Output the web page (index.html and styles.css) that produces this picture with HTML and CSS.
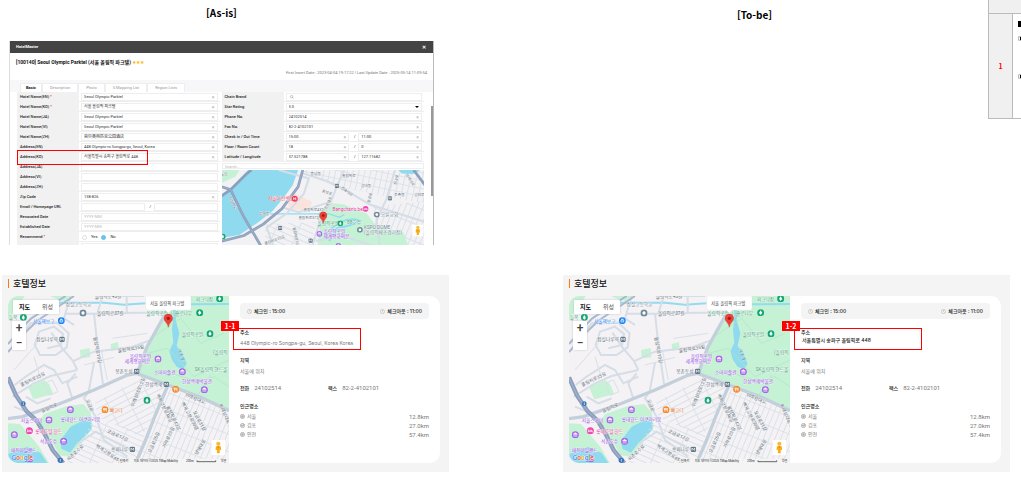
FILE: index.html
```html
<!DOCTYPE html>
<html lang="ko">
<head>
<meta charset="utf-8">
<title>Hotel address comparison</title>
<link rel="stylesheet" href="styles.css">
</head>
<body>
<svg class="defs" width="0" height="0" aria-hidden="true">
  <defs>
    <pattern id="blocksA" width="60" height="17" patternUnits="userSpaceOnUse" patternTransform="rotate(-27)"><path d="M0 1H60M1 0V17" class="lane"/></pattern>
    <pattern id="blocksB" width="62" height="16" patternUnits="userSpaceOnUse" patternTransform="rotate(24)"><path d="M0 1H62M1 0V16" class="lane"/></pattern>
    <pattern id="blocksC" width="16" height="48" patternUnits="userSpaceOnUse" patternTransform="rotate(22)"><path d="M0 1H16M1 0V48" class="lane"/></pattern>
    <pattern id="blocksD" width="17" height="23" patternUnits="userSpaceOnUse" patternTransform="rotate(12)"><path d="M0 1H17M1 0V23" class="lane"/></pattern>
    <symbol id="tree" viewBox="-11 -11 22 22"><circle r="10.500" fill="#16a673"/><path d="M0-7L5 1H2L5 4H1V7H-1V4H-5L-2 1H-5Z" fill="#fff"/></symbol>
    <symbol id="museum" viewBox="-11 -11 22 22"><circle r="10.500" fill="#a763ea"/><path d="M-6-2L0-6L6-2V-1H-6ZM-4 0V4M0 0V4M4 0V4M-6 5H6" fill="#fff" stroke="#fff" stroke-width="1.500"/></symbol>
    <symbol id="food" viewBox="-11 -11 22 22"><circle r="10.500" fill="#f58a2c"/><path d="M-5-5V0H-1V-5M-3-5V6M4 6V-5Q0-3 2 1H4" fill="none" stroke="#fff" stroke-width="2"/></symbol>
    <symbol id="metro" viewBox="-9 -9 18 18"><rect x="-8" y="-8" width="16" height="16" rx="4" fill="#637786"/><path d="M-4 4V-4L0 1L4-4V4" fill="none" stroke="#fff" stroke-width="2"/></symbol>
    <symbol id="bed" viewBox="-11 -11 22 22"><circle r="10.500" fill="#f245ad"/><path d="M-6-4V5M-6 2H6V5M-3-1H5V2" fill="none" stroke="#fff" stroke-width="2"/></symbol>
    <symbol id="school" viewBox="-11 -11 22 22"><circle r="10.500" fill="#71889a"/><circle r="5" fill="#fff"/></symbol>
    <symbol id="pin" viewBox="0 0 28 42"><path d="M14 1C6 1 1 7 1 14C1 24 12 27 14 41C16 27 27 24 27 14C27 7 22 1 14 1Z" fill="#ea4335" stroke="#c5221f"/><circle cx="14" cy="14" r="5" fill="#b31412"/></symbol>
    <symbol id="pegman" viewBox="0 0 40 44"><rect width="40" height="44" rx="3" fill="#fff"/><circle cx="20" cy="11" r="6" fill="#fbbc2c"/><path d="M13 18H27L28 29H24V38H16V29H12Z" fill="#f9ad17"/><path d="M16 19H24L20 24Z" fill="#d98510"/></symbol>

    <symbol id="cityMap" viewBox="42 78 663 501" preserveAspectRatio="xMidYMid slice">
      <rect x="42" y="78" width="663" height="501" fill="#f4f2f4"/>
      <path d="M42 78H92L74 108L42 150ZM168 78H230L214 94L190 88ZM258 240L287 234L289 262L260 265ZM350 222L372 216L374 238L352 243ZM102 352L150 330L165 342L178 372L118 388Z" class="park"/>
      <path d="M540 78H705V420L610 378L525 342L432 306L460 232L520 130Z" class="park"/>
      <path d="M150 432L220 408L268 402L290 428L296 470L262 520L225 560L196 556L168 505L132 462Z" class="park"/>
      <path d="M42 460L78 462L134 528L165 579H42Z" class="park"/>
      <path d="M42 552L100 530L140 549L160 579H42ZM230 470L270 450L293 458L292 480L250 520L228 548L202 536L198 512Z" class="water"/>
      <path d="M538 78L548 108L545 150L556 190L548 228L566 250L578 282L566 298L548 290L534 270L526 244L538 218L534 180L538 140Z" class="water"/>
      <path d="M304 398L430 325L516 355L470 460L440 500L310 440Z" fill="url(#blocksA)"/>
      <path d="M300 445L455 490L425 579H220Z" fill="url(#blocksB)"/>
      <path d="M528 356L705 425V579H435L476 468Z" fill="url(#blocksC)"/>
      <path d="M195 98H330L390 104L455 100M590 103L705 102" fill="none" stroke="#91dcef" stroke-width="6"/>
      <g class="road">
        <path d="M215 131H330L420 128H520M300 130L309 215L327 342M230 78L210 145L240 165M250 300L236 272L205 236L172 188M236 274L300 245L410 232L465 212M250 320L205 340L180 300L150 285L95 320L62 345M300 278L284 365L270 385L305 440L330 510L400 560M245 310L220 340L235 385M80 200L110 160L190 158L224 190L218 232L185 255L138 255L122 225L135 185L180 170L207 192L201 225L160 235M56 380L120 340L170 318L250 300M326 79L310 130M398 78V128M110 430L60 410M95 380L130 400L170 385M250 522L305 485L360 515L420 545M360 78H450"/>
      </g>
      <path d="M150 340L175 330L192 365L166 376ZM120 260L138 320M60 300L130 220M270 285L360 262M355 205L460 190M322 240L340 330" class="lane"/>
      <path d="M478 200L560 145L620 220L690 190M460 250L520 235L600 320L705 270M500 300L610 335L660 320L705 350M610 378L650 315" class="trail"/>
      <path d="M430 310L458 232L525 112L542 78M42 446L86 440L195 402L300 360L400 315L428 310L530 348L620 382L705 422M520 350L482 440L455 510L425 579" class="avenue"/>
      <path d="M42 222L78 180L112 145L215 78M42 246L88 193L130 152L240 78" class="highway"/>
      <path d="M42 322L66 376L98 424L128 452L154 496L176 540L208 579" class="expressway"/>
      <path d="M42 322L66 376L98 424L128 452L154 496L176 540L208 579" fill="none" stroke="#b4c3d8" stroke-width="2"/>
      <g class="place">
        <text x="302" y="85">올림픽로43길</text><text x="309" y="136">올림픽로37길</text>
        <text x="372" y="248" transform="rotate(-10 372 248)">올림픽로35길</text>
        <text x="298" y="202" transform="rotate(79 298 202)">올림픽로13길</text>
        <text x="82" y="350" transform="rotate(-26 82 350)">올림픽로35길</text>
        <text x="144" y="428" transform="rotate(-23 144 428)">올림픽로</text>
        <text x="127" y="213">잠실나루역</text><text x="364" y="309">몽촌토성</text><text x="453" y="347">한성백제</text><text x="351" y="543">송파나루</text>
        <text x="276" y="390" transform="rotate(70 276 390)">오금로</text>
        <text x="572" y="377" transform="rotate(23 572 377)">위례성대로</text>
        <text x="338" y="487" transform="rotate(24 338 487)">오금로17길</text>
        <text x="304" y="530" transform="rotate(34 304 530)">백제고분로45길</text>
        <text x="224" y="574" transform="rotate(-44 224 574)">석촌호수로</text>
        <text x="419" y="411" transform="rotate(-68 419 411)">위례성대로12길</text>
        <text x="486" y="375" transform="rotate(64 486 375)">백제고분로48길</text>
        <text x="516" y="410" transform="rotate(64 516 410)">올림픽로43길</text>
        <text x="562" y="400" transform="rotate(62 562 400)">백제고분로50길</text>
        <text x="596" y="425" transform="rotate(62 596 425)">오금로31길</text>
        <text x="674" y="404" transform="rotate(66 674 404)">위례성대로16길</text>
        <text x="470" y="550" transform="rotate(-66 470 550)">오금로25길</text>
        <text x="514" y="535" transform="rotate(-66 514 535)">가락로23길</text>
        <text x="610" y="556" transform="rotate(-60 610 556)">양재대로</text>
      </g>
      <g class="place grey"><text x="215" y="109">잠실고등학교</text><text x="548" y="240" transform="rotate(65 548 240)" fill="#268ba5">몽촌호</text></g>
      <g class="place green"><text x="44" y="147">들목</text><text x="457" y="135">올림픽공원</text><text x="530" y="135">나홀로나무</text><text x="563" y="197">올림픽공원</text><text x="602" y="303">SK올림픽 핸드볼</text><text x="657" y="252">(올림픽</text><text x="606" y="92">피크닉장</text></g>
      <g class="place violet"><text x="407" y="264">올림픽공원</text><text x="392" y="280">세계평화의문</text><text x="480" y="311">소마미술관</text><text x="564" y="339">한성백제박물관</text><text x="80" y="456">서울스카이</text><text x="200" y="452">롯데월드 아쿠아리움</text><text x="138" y="518">석촌호수</text><text x="44" y="546">: 매직아일랜드</text></g>
      <g class="place"><text x="117" y="158" fill="#167bf0">서울책보고</text><text x="124" y="488" fill="#e8369b">롯데호텔 월드</text><text x="347" y="425" fill="#e46b16">뻐고디</text></g>
      <use href="#tree" x="77" y="131" width="22" height="22"/><use href="#tree" x="606" y="117" width="22" height="22"/><use href="#tree" x="637" y="180" width="22" height="22"/><use href="#tree" x="448" y="380" width="22" height="22"/><use href="#tree" x="666" y="75" width="22" height="22"/>
      <use href="#museum" x="481" y="256" width="22" height="22"/><use href="#museum" x="554" y="294" width="22" height="22"/><use href="#museum" x="620" y="348" width="22" height="22"/><use href="#museum" x="218" y="408" width="22" height="22"/><use href="#museum" x="154" y="439" width="22" height="22"/><use href="#museum" x="198" y="503" width="22" height="22"/><use href="#museum" x="50" y="483" width="22" height="22"/><use href="#museum" x="96" y="555" width="22" height="22"/>
      <use href="#food" x="534" y="347" width="22" height="22"/><use href="#food" x="322" y="408" width="22" height="22"/><use href="#bed" x="95" y="471" width="22" height="22"/>
      <use href="#metro" x="195" y="199" width="18" height="18"/><use href="#metro" x="419" y="295" width="18" height="18"/><use href="#metro" x="508" y="334" width="18" height="18"/><use href="#metro" x="406" y="529" width="18" height="18"/>
      <use href="#school" x="256" y="118" width="22" height="22"/>
      <circle cx="202" cy="152" r="10" fill="#1685f5"/><path d="M198 150H206V156H198ZM200 150V147H204V150" fill="none" stroke="#fff" stroke-width="2"/>
      <circle cx="88" cy="401" r="7" fill="#3675bd"/><circle cx="199" cy="571" r="8" fill="#3675bd"/><path d="M88 397V405M199 567V575" stroke="#fff" stroke-width="2"/>
      <path d="M455 78H591V115Q591 120 586 120H532L523 129L514 120H460Q455 120 455 115Z" fill="#fff" stroke="#dedede"/>
      <text x="468" y="104" class="callout">서울 올림픽 파크텔</text>
      <use href="#pin" x="509" y="131" width="28" height="42"/>
      <rect x="374" y="566" width="331" height="13" fill="#f5f5f5" opacity=".8"/>
      <g class="credit"><text x="378" y="576">단축키</text><text x="419" y="576">지도 데이터 ©2025 TMap Mobility</text><text x="576" y="576">200m</text><text x="680" y="576">약관</text></g>
      <path d="M609 571V575H665V571" fill="none" stroke="#222" stroke-width="2"/>
      <text x="53" y="571" class="google"><tspan fill="#4285f4">G</tspan><tspan fill="#ea4335">o</tspan><tspan fill="#e9a900">o</tspan><tspan fill="#4285f4">g</tspan><tspan fill="#34a853">l</tspan><tspan fill="#ea4335">e</tspan></text>
      <use href="#pegman" x="652" y="510" width="42" height="46"/>
    </symbol>
  </defs>
</svg>

<main class="page">
  <h2 class="heading heading-asis">[As-is]</h2>
  <h2 class="heading heading-tobe">[To-be]</h2>

  <section class="window">
    <header class="window-bar"><span>HotelMaster</span><button type="button" aria-label="Close">✕</button></header>
    <div class="window-title">
      <h1>[100140] Seoul Olympic Parktel (서울 올림픽 파크텔) <span class="stars">★★★</span></h1>
      <p>First Insert Date : 2023-04-04 19:17:22 | Last Update Date : 2025-05-14 11:09:54</p>
    </div>
    <nav class="tabs">
      <button type="button" class="active">Basic</button><button type="button">Description</button><button type="button">Photo</button><button type="button">S Mapping List</button><button type="button">Region Lists</button>
    </nav>
    <form class="form">
      <div class="column">
        <div class="row"><label for="en">Hotel Name(EN) <i>*</i></label><span class="field"><input id="en" value="Seoul Olympic Parktel"><button type="button" aria-label="Clear">×</button></span></div>
        <div class="row"><label for="ko">Hotel Name(KO) <i>*</i></label><span class="field"><input id="ko" value="서울 올림픽 파크텔"><button type="button" aria-label="Clear">×</button></span></div>
        <div class="row"><label for="ja">Hotel Name(JA)</label><span class="field"><input id="ja" value="Seoul Olympic Parktel"><button type="button" aria-label="Clear">×</button></span></div>
        <div class="row"><label for="vi">Hotel Name(VI)</label><span class="field"><input id="vi" value="Seoul Olympic Parktel"><button type="button" aria-label="Clear">×</button></span></div>
        <div class="row"><label for="zh">Hotel Name(ZH)</label><span class="field"><input id="zh" value="首尔奥林匹克公园酒店"><button type="button" aria-label="Clear">×</button></span></div>
        <div class="row"><label for="aen">Address(EN)</label><span class="field"><input id="aen" value="448 Olympic-ro Songpa-gu, Seoul, Korea"><button type="button" aria-label="Clear">×</button></span></div>
        <div class="row marked"><label for="ako">Address(KO)</label><span class="field"><input id="ako" value="서울특별시 송파구 올림픽로 448"><button type="button" aria-label="Clear">×</button></span></div>
        <div class="row"><label for="aja">Address(JA)</label><span class="field"><input id="aja"></span></div>
        <div class="row"><label for="avi">Address(VI)</label><span class="field"><input id="avi"></span></div>
        <div class="row"><label for="azh">Address(ZH)</label><span class="field"><input id="azh"></span></div>
        <div class="row"><label for="zip">Zip Code</label><span class="field"><input id="zip" value="138-826"><button type="button" aria-label="Clear">×</button></span></div>
        <div class="row pair"><label for="mail">Email / Homepage URL</label><span class="field"><input id="mail"></span><b>/</b><span class="field"><input aria-label="Homepage URL"></span></div>
        <div class="row"><label for="ren">Renovated Date</label><span class="field"><input id="ren" placeholder="YYYY-MM"></span></div>
        <div class="row"><label for="est">Established Date</label><span class="field"><input id="est" placeholder="YYYY-MM"></span></div>
        <div class="row"><span class="name">Recommend <i>*</i></span><span class="choices"><label><input type="radio" name="rec">Yes</label><label><input type="radio" name="rec" checked>No</label></span></div>
        <div class="row"><label for="rank">Booking Owner <i>*</i></label><span class="field"><input id="rank" value="50"><button type="button" aria-label="Clear">×</button></span></div>
      </div>
      <div class="column">
        <div class="row"><label for="chain">Chain Brand</label><span class="field"><svg class="lens" viewBox="0 0 10 10"><circle cx="4" cy="4" r="3"/><path d="M6 6L9 9"/></svg><input id="chain"></span></div>
        <div class="row"><label for="star">Star Rating</label><span class="field"><select id="star"><option>3.0</option></select><span class="caret"></span></span></div>
        <div class="row"><label for="tel">Phone No.</label><span class="field"><input id="tel" value="24102514"><button type="button" aria-label="Clear">×</button></span></div>
        <div class="row"><label for="fax">Fax No.</label><span class="field"><input id="fax" value="82-2-4102101"><button type="button" aria-label="Clear">×</button></span></div>
        <div class="row pair"><label for="cin">Check in / Out Time</label><span class="field"><input id="cin" value="15:00"><button type="button" aria-label="Clear">×</button></span><b>/</b><span class="field"><input aria-label="Out time" value="11:00"><button type="button" aria-label="Clear">×</button></span></div>
        <div class="row pair"><label for="floor">Floor / Room Count</label><span class="field"><input id="floor" value="18"><button type="button" aria-label="Clear">×</button></span><b>/</b><span class="field"><input aria-label="Room count" value="0"><button type="button" aria-label="Clear">×</button></span></div>
        <div class="row pair"><label for="lat">Latitude / Longitude</label><span class="field"><input id="lat" value="37.521788"><button type="button" aria-label="Clear">×</button></span><b>/</b><span class="field"><input aria-label="Longitude" value="127.11682"><button type="button" aria-label="Clear">×</button></span></div>
        <span class="field search"><input aria-label="Search" placeholder="Search..."></span>
        <svg class="area-map" viewBox="17 30 611 225" preserveAspectRatio="xMidYMin slice" role="img" aria-label="지도">
          <rect x="17" y="30" width="611" height="225" fill="#f2f1f3"/>
          <path d="M262 30H628V130L520 110L350 75L270 40Z" fill="url(#blocksD)"/>
          <path d="M470 140L628 120V255H470Z" fill="url(#blocksC)"/>
          <path d="M150 190L300 185L290 255H150Z" fill="url(#blocksB)"/>
          <path d="M17 30H75L62 50L17 70ZM470 200L560 215L575 255H470Z" class="park"/>
          <path d="M305 160L345 128L385 132L420 148L450 158L475 190L480 255H305L312 205Z" class="park"/>
          <path d="M215 110L240 100L290 125L280 148L222 148Z" fill="#fbe3dd"/>
          <path d="M100 30H248L232 75L205 112L172 152L130 185L75 222L17 232V108L52 80Z" class="water"/>
          <path d="M545 30H610L590 42L555 40Z" class="water"/>
          <path d="M165 160H340L370 170L385 162" fill="none" stroke="#91dcef" stroke-width="4"/>
          <path d="M345 205Q390 165 430 180Q405 198 365 200L340 240" fill="none" stroke="#91dcef" stroke-width="6"/>
          <path d="M262 40L330 62L360 75L415 105L460 132L628 185M385 30L362 80L345 125L310 190L290 255M535 30L510 115L480 180L490 255M190 30L280 55L265 100L215 158L155 200L175 255M300 240L380 225L470 255M340 125L250 155L200 140" class="road"/>
          <path d="M17 78L48 88L88 170L138 255M17 110L48 88L95 42L110 30M590 30L628 80" class="expressway thin"/>
          <path d="M262 30L248 80L200 145L145 190L88 224L17 242" class="expressway thin"/>
          <path d="M17 78L48 88L88 170L138 255M262 30L248 80L200 145L145 190L88 224L17 242" fill="none" stroke="#a6b6ce" stroke-width="2"/>
          <g class="place small"><text x="285" y="46">풍납동</text><text x="318" y="95" transform="rotate(20 318 95)">풍성로</text><text x="378" y="52">올림픽로</text><text x="434" y="79">성내동</text><text x="533" y="108">둔촌동</text><text x="592" y="107">성안로</text><text x="133" y="163">잠실동</text><text x="264" y="152">올림픽로43길</text><text x="249" y="174">올림픽로37길</text><text x="332" y="148" transform="rotate(-65 332 148)">강동대로</text><text x="374" y="85" transform="rotate(35 374 85)">천호대로</text><text x="538" y="75" transform="rotate(-75 538 75)">성내로</text><text x="565" y="45" transform="rotate(55 565 45)">양재대로</text><text x="232" y="200" transform="rotate(78 232 200)">올림픽로35길</text><text x="150" y="252" transform="rotate(-20 150 252)">올림픽로35길</text><text x="42" y="112" transform="rotate(62 42 112)">잠실대교</text><text x="20" y="50" transform="rotate(-15 20 50)">뚝섬</text><text x="460" y="128" transform="rotate(-75 460 128)">풍성로</text></g>
          <g class="place"><text x="159" y="119" fill="#e83d5a">서울아산병원</text><text x="350" y="150" fill="#ee309f">Bangchan's bed</text><text x="493" y="167" class="slate">오륜교회</text><text x="443" y="206" class="slate">KSPO DOME</text><text x="443" y="219" class="slate">(올림픽체조경기장)</text></g>
          <g class="place violet"><text x="323" y="217">올림픽공원</text><text x="323" y="230">세계평화의문</text></g>
          <g class="place green"><text x="305" y="193">올림픽공원</text><text x="393" y="190">88호수</text></g>
          <circle cx="238" cy="115" r="9" fill="#ee3e5c"/><path d="M235 111V119M241 111V119M235 115H241" stroke="#fff" stroke-width="2"/>
          <use href="#bed" x="439" y="136" width="18" height="18"/><use href="#tree" x="364" y="179" width="18" height="18"/><use href="#tree" x="16" y="218" width="18" height="18"/><use href="#museum" x="302" y="210" width="18" height="18"/><use href="#museum" x="358" y="246" width="18" height="18"/><use href="#school" x="472" y="153" width="18" height="18"/><use href="#school" x="422" y="198" width="18" height="18"/><use href="#metro" x="356" y="70" width="14" height="14"/><use href="#metro" x="513" y="107" width="14" height="14"/><use href="#metro" x="188" y="195" width="14" height="14"/><use href="#metro" x="278" y="232" width="14" height="14"/>
          <use href="#pin" x="310" y="153" width="25" height="36"/>
          <use href="#pegman" x="585" y="191" width="35" height="36"/>
        </svg>
      </div>
    </form>
    <span class="scroll-thumb"></span>
  </section>

  <section class="hotel hotel-asis">
    <h3>호텔정보</h3>
    <div class="card">
      <div class="map">
        <svg role="img" aria-label="지도"><use href="#cityMap"/></svg>
        <div class="map-type"><button type="button" class="on">지도</button><button type="button">위성</button></div>
        <div class="map-zoom"><button type="button" aria-label="확대">+</button><button type="button" aria-label="축소">−</button></div>
      </div>
      <div class="info">
        <div class="times"><span><svg class="clock" viewBox="0 0 12 12"><circle cx="6" cy="6" r="5"/><path d="M6 3V6L8 8"/></svg>체크인 : 15:00</span><span><svg class="clock" viewBox="0 0 12 12"><circle cx="6" cy="6" r="5"/><path d="M6 3V6L8 8"/></svg>체크아웃 : 11:00</span></div>
        <div class="block address"><span class="mark"><em>1-1</em></span><h4>주소</h4><p>448 Olympic-ro Songpa-gu, Seoul, Korea Korea</p></div>
        <div class="block"><h4>지역</h4><p>서울에 위치</p></div>
        <dl class="contact"><div><dt>전화</dt><dd>24102514</dd></div><div><dt>팩스</dt><dd>82-2-4102101</dd></div></dl>
        <h4 class="near">인근명소</h4>
        <ul class="distances">
          <li><svg class="spot" viewBox="0 0 12 12"><circle cx="6" cy="6" r="5"/><path d="M3 6H9M4 4H8M4 8H8"/></svg>서울<span>12.8km</span></li>
          <li><svg class="spot" viewBox="0 0 12 12"><circle cx="6" cy="6" r="5"/><path d="M3 6L9 4L7 8Z"/></svg>김포<span>27.0km</span></li>
          <li><svg class="spot" viewBox="0 0 12 12"><circle cx="6" cy="6" r="5"/><path d="M3 6H9M4 4H8M4 8H8"/></svg>인천<span>57.4km</span></li>
        </ul>
      </div>
    </div>
  </section>

  <section class="hotel hotel-tobe">
    <h3>호텔정보</h3>
    <div class="card">
      <div class="map">
        <svg role="img" aria-label="지도"><use href="#cityMap"/></svg>
        <div class="map-type"><button type="button" class="on">지도</button><button type="button">위성</button></div>
        <div class="map-zoom"><button type="button" aria-label="확대">+</button><button type="button" aria-label="축소">−</button></div>
      </div>
      <div class="info">
        <div class="times"><span><svg class="clock" viewBox="0 0 12 12"><circle cx="6" cy="6" r="5"/><path d="M6 3V6L8 8"/></svg>체크인 : 15:00</span><span><svg class="clock" viewBox="0 0 12 12"><circle cx="6" cy="6" r="5"/><path d="M6 3V6L8 8"/></svg>체크아웃 : 11:00</span></div>
        <div class="block address local"><span class="mark"><em>1-2</em></span><h4>주소</h4><p>서울특별시 송파구 올림픽로 448</p></div>
        <div class="block"><h4>지역</h4><p>서울에 위치</p></div>
        <dl class="contact"><div><dt>전화</dt><dd>24102514</dd></div><div><dt>팩스</dt><dd>82-2-4102101</dd></div></dl>
        <h4 class="near">인근명소</h4>
        <ul class="distances">
          <li><svg class="spot" viewBox="0 0 12 12"><circle cx="6" cy="6" r="5"/><path d="M3 6H9M4 4H8M4 8H8"/></svg>서울<span>12.8km</span></li>
          <li><svg class="spot" viewBox="0 0 12 12"><circle cx="6" cy="6" r="5"/><path d="M3 6L9 4L7 8Z"/></svg>김포<span>27.0km</span></li>
          <li><svg class="spot" viewBox="0 0 12 12"><circle cx="6" cy="6" r="5"/><path d="M3 6H9M4 4H8M4 8H8"/></svg>인천<span>57.4km</span></li>
        </ul>
      </div>
    </div>
  </section>

  <table class="notes">
    <tr><th colspan="2"></th></tr>
    <tr><td class="number">1</td><td class="detail"><span class="square"></span><span class="bullet"></span><span class="bullet second"></span></td></tr>
  </table>
</main>
</body>
</html>
```
FILE: styles.css
```css
* { box-sizing: border-box; }
body { margin: 0; background: #fff; color: #222; font-family: Roboto, "Noto Sans CJK KR", sans-serif; overflow: hidden; }
h1, h2, h3, h4, p, dl, dd, ul { margin: 0; padding: 0; }
button, input, select { font: inherit; color: inherit; border: 0; padding: 0; margin: 0; background: none; min-width: 0; }
button { line-height: 1; cursor: pointer; }
.defs { position: absolute; }

.page { position: relative; display: grid; grid-template-columns: 1fr 1fr; grid-template-rows: 41px 204px auto; column-gap: 114px; padding: 0 11px 0 2px; }
.heading { font: bold 10px/14px "Noto Sans CJK KR", sans-serif; text-align: center; color: #000; }
.heading-asis { padding: 6px 8px 0 0; }
.heading-tobe { padding: 8px 64px 0 0; }

.window { position: relative; grid-column: 1; grid-row: 2; margin: 0 15px 0 7px; overflow: hidden; font-size: 4px; line-height: 6px; border-left: 1px solid #ddd; border-right: 1px solid #bbb; }
.window-bar { display: flex; justify-content: space-between; align-items: center; height: 12px; padding: 0 7px 0 6px; background: #444; color: #fff; font-weight: bold; }
.window-bar button { font-size: 5px; }
.window-title { height: 27px; padding: 5px 6px 0 6px; }
.window-title h1 { font-size: 5px; line-height: 8px; color: #111; }
.window-title p { padding-top: 3px; text-align: right; color: #777; }
.stars { font-size: 4px; color: #fcb913; }
.tabs { display: flex; height: 12px; padding: 3px 0 0 10px; background: #f7f6f9; }
.tabs button { padding: 0 7px; background: #fff; color: #999; border: 1px solid #eee; border-bottom: 0; }
.tabs .active { padding: 0 5px; color: #111; font-weight: bold; }
.form { display: grid; grid-template-columns: 1fr 1fr; gap: 2px; padding: 0 9px 0 7px; }
.column { min-width: 0; }
.row { position: relative; display: grid; grid-template-columns: 62px 1fr; column-gap: 2px; align-items: center; height: 10px; border-bottom: 1px solid #eee; }
.row.pair { grid-template-columns: 62px 1fr 3px 1fr; }
.row > label, .row > .name { align-self: stretch; padding: 2px 3px; background: #f1f1f1; color: #222; font-weight: 500; white-space: nowrap; }
.row i { color: #f00; font-style: normal; }
.row b { font-weight: normal; text-align: center; }
.field { display: flex; align-items: center; height: 8px; margin-right: 2px; padding: 0 2px; border: 1px solid #eee; background: #fff; color: #333; }
.field input, .field select { flex: 1; width: 100%; height: 6px; line-height: 6px; appearance: none; }
.field input::placeholder { color: #bbb; }
.field button { color: #aaa; font-size: 5px; }
.lens { width: 4px; height: 4px; margin-left: 1px; fill: none; stroke: #777; }
.caret { border: 2px solid transparent; border-top-color: #000; border-bottom: 0; }
.choices { display: flex; gap: 4px; padding-left: 1px; }
.choices label { display: flex; align-items: center; gap: 4px; }
.choices input { appearance: none; width: 5px; height: 5px; border: 1px solid #ddd; border-radius: 50%; }
.choices input:checked { border-color: #62c5ea; background: #62c5ea; }
.marked { z-index: 1; }
.marked::after { content: ""; position: absolute; left: 0; top: -2px; width: 129px; height: 13px; border: 1px solid #f00; }
.search { margin: 1px 0; height: 6px; }
.search input { height: 4px; line-height: 4px; }
.area-map { display: block; width: 100%; height: 76px; }
.scroll-thumb { position: absolute; right: 0; top: 65px; width: 2px; height: 90px; background: #999; }

.hotel { grid-row: 3; margin-top: 30px; padding: 4px 9px 9px 6px; background: #f4f4f4; }
.hotel-asis { grid-column: 1; }
.hotel-tobe { grid-column: 2; }
.hotel h3 { margin-bottom: 8px; padding-left: 4px; border-left: 1px solid #f47b20; color: #111; font: 500 9px/9px "Noto Sans CJK KR", sans-serif; }
.card { display: grid; grid-template-columns: 221fr 211fr; height: 167px; overflow: hidden; border-radius: 10px; background: #fff; }
.map { position: relative; min-width: 0; overflow: hidden; }
.map > svg { display: block; width: 100%; height: 100%; }
.map-type, .map-zoom { position: absolute; display: flex; background: #fff; box-shadow: 0 0 2px #bbb; border-radius: 1px; font: 6px/14px "Noto Sans CJK KR", sans-serif; }
.map-type { left: 5px; top: 4px; width: 46px; height: 14px; }
.map-type button { flex: 1; color: #555; }
.map-type .on { color: #000; font-weight: bold; }
.map-zoom { left: 4px; top: 25px; width: 14px; height: 29px; flex-direction: column; }
.map-zoom button { flex: 1; color: #444; font: 500 12px/14px Roboto, sans-serif; }

.info { padding: 7px 11px; font: 5px/8px Inter, "Noto Sans CJK KR", sans-serif; color: #777; }
.times { display: flex; justify-content: space-between; align-items: center; height: 16px; padding: 0 7px; border-radius: 4px; background: #f4f4f4; color: #222; font-weight: 500; }
.times span { display: flex; align-items: center; gap: 2px; }
.clock, .spot { width: 5px; height: 5px; fill: none; stroke: #999; }
.spot { stroke: #555; }
.info h4, .info dt { color: #222; font-size: 5px; font-weight: 500; }
.block { display: grid; gap: 3px; padding-top: 9px; }
.block.address { position: relative; }
.local { padding-bottom: 3px; }
.block.local { gap: 0; }
.local p { padding-left: 1px; color: #222; font-weight: 500; }
.mark { position: absolute; left: -7px; top: 9px; width: 128px; height: 22px; border: 1px solid #f00; }
.mark em { position: absolute; left: -13px; top: -8px; width: 18px; height: 10px; background: #f00; color: #fff; font: bold 7px/10px "Noto Sans CJK KR", sans-serif; text-align: center; }
.contact { display: grid; grid-template-columns: 88fr 101fr; padding-top: 9px; }
.contact div { display: flex; gap: 5px; }
.contact dd, .distances span { font: 6px/8px Roboto, sans-serif; }
.near { padding-top: 10px; }
.distances { padding-top: 2px; list-style: none; }
.distances li { display: flex; align-items: center; gap: 2px; line-height: 9px; height: 9px; }
.distances span { margin-left: auto; }

.notes { position: absolute; right: 0; top: 0; width: 33px; border-collapse: collapse; }
.notes th { height: 13px; padding: 0; background: #f0f0f0; border: 1px solid #bbb; border-width: 0 0 1px 1px; }
.notes td { height: 105px; padding: 0; border: 1px solid #bbb; border-right: 0; }
.notes .number { width: 24px; background: #f0f0f0; color: #f00; text-align: center; font: bold 7px/10px "Noto Sans CJK KR", sans-serif; }
.notes .detail { vertical-align: top; padding: 7px 0 0 5px; }
.square, .bullet { display: block; height: 6px; background: #000; }
.bullet { height: 5px; margin-top: 9px; border: 1px solid #bbb; border-right: 0; border-radius: 2px 0 0 2px; background: linear-gradient(90deg, #fff 1px, #000 1px); }
.second { margin-top: 33px; }

.lane { fill: none; stroke: #d9e0e8; stroke-width: 3; }
.road { fill: none; stroke: #d5dde6; stroke-width: 6; }
.trail { fill: none; stroke: #b3e3c5; stroke-width: 2; }
.avenue { fill: none; stroke: #c3cfdb; stroke-width: 10; }
.highway { fill: none; stroke: #a9b8cd; stroke-width: 6; }
.expressway { fill: none; stroke: #8c9fbd; stroke-width: 13; }
.expressway.thin { stroke-width: 8; }
.park { fill: #c5f1d5; }
.water { fill: #8fdaee; }
.place { font-family: Roboto, "Noto Sans CJK KR", sans-serif; font-size: 14px; fill: #5b6a77; stroke: #fff; stroke-width: 1px; paint-order: stroke; }
.place.small { font-size: 11px; }
.place.grey, .slate { fill: #718393; }
.place.green { fill: #3a9873; }
.place.violet { fill: #934be0; }
.callout { font: 13px "Noto Sans CJK KR", sans-serif; fill: #444; }
.credit { font: 9px Roboto, "Noto Sans CJK KR", sans-serif; fill: #222; }
.google { font: 500 20px Roboto, sans-serif; stroke: #fff; stroke-width: 2px; paint-order: stroke; }
```
